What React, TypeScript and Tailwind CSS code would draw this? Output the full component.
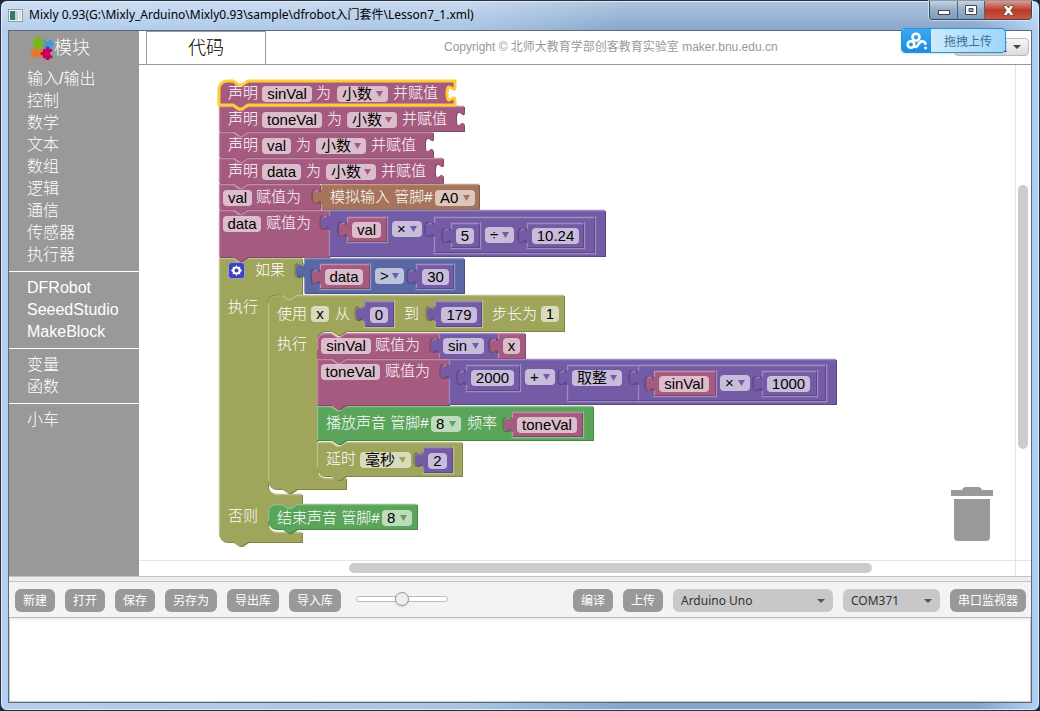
import React from "react";

type Hue = { fill: string; light: string; dark: string };
const PINK: Hue = { fill: "#a55b80", light: "#c08ca6", dark: "#844966" };
const PURPLE: Hue = { fill: "#745ba5", light: "#9e8cc0", dark: "#5d4984" };
const OLIVE: Hue = { fill: "#9fa55b", light: "#bcc08c", dark: "#7f8449" };
const BROWN: Hue = { fill: "#a5745b", light: "#c09e8c", dark: "#845d49" };
const BLUE: Hue = { fill: "#5b67a5", light: "#8c95c0", dark: "#495284" };
const GREEN: Hue = { fill: "#5ba55b", light: "#8cc08c", dark: "#498449" };

/* Scene coordinates of the workspace's top left corner. */
const ORIGIN = { x: 139, y: 65 };

const NOTCH = "l6,4 h3 l6,-4";
const NOSE = "l-6,4 h-3 l-6,-4";
const TAB_UP = "c0,-10 -8,8 -8,-7.5 s8,2.5 8,-7.5";
const TAB_DOWN = "c0,10 -8,-8 -8,7.5 s8,-2.5 8,7.5";

function Shape({ d, edge, hue }: { d: string; edge: string; hue: Hue }) {
  return (
    <g>
      <path d={d} fill={hue.dark} transform="translate(1,1)" />
      <path d={d} fill={hue.fill} />
      <path d={edge} fill="none" stroke={hue.light} strokeWidth="1.3" />
    </g>
  );
}

type BoxProps = { x: number; y: number; w: number; h: number; hue: Hue };

/* A block that gives a value, with the puzzle tab at its left. */
function Value({ x, y, w, h, hue, inside, flush }: BoxProps & { inside: Hue; flush?: boolean }) {
  return (
    <g>
      {!flush && (
        <path
          d={`M${x - 0.5},${y + h + 1.5} H${x + w + 1.5} V${y - 1}`}
          fill="none"
          stroke={inside.light}
          strokeWidth="1.3"
        />
      )}
      <path d={`M${x - 1},${y + 20} ${TAB_UP}`} fill="none" stroke={inside.dark} strokeWidth="1.5" />
      <Shape
        hue={hue}
        d={`M${x},${y} h${w} v${h} h${-w} V${y + 20} ${TAB_UP} z`}
        edge={`M${x + 0.5},${y + h} V${y + 20} m-4,-4 m4,-10 V${y + 0.5} H${x + w}`}
      />
      <path d={`M${x - 6.5},${y + 8} q1,-2.500 4.500,-1`} fill="none" stroke={hue.light} />
    </g>
  );
}

type RowProps = BoxProps & { roundTop?: boolean; roundBottom?: boolean; socket?: boolean; selected?: boolean };

/* A block that is stacked under and over others. */
function Row({ x, y, w, h, hue, roundTop, roundBottom, socket, selected }: RowProps) {
  const top = roundTop ? `M${x},${y + 8} a8,8 0 0 1 8,-8 H${x + 14}` : `M${x},${y} H${x + 14}`;
  const right = socket ? `v5 ${TAB_DOWN} V${y + h}` : `v${h}`;
  const bottom = roundBottom
    ? `H${x + 29} ${NOSE} H${x + 8} a8,8 0 0 1 -8,-8 z`
    : `H${x + 29} ${NOSE} H${x} z`;
  const d = `${top} ${NOTCH} H${x + w} ${right} ${bottom}`;
  const edge = roundTop
    ? `M${x + 0.5},${y + h - 8} V${y + 8} a7.5,7.5 0 0 1 7.5,-7.5 H${x + 14} ${NOTCH} H${x + w}`
    : `M${x + 0.5},${y + h - (roundBottom ? 8 : 0)} V${y + 0.5} H${x + 14} ${NOTCH} H${x + w}`;
  return (
    <g>
      <Shape d={d} edge={edge} hue={hue} />
      {selected && <path d={d} fill="none" stroke="#fc3" strokeWidth="3" strokeLinejoin="round" />}
    </g>
  );
}

function Blocks() {
  return (
    <svg
      className="absolute left-0 top-0 block"
      width="720"
      height="494"
      viewBox={`${ORIGIN.x} ${ORIGIN.y} 720 494`}
      aria-hidden="true"
    >
      <Shape
        hue={OLIVE}
        d={`M219,258 H233 ${NOTCH} H302 V295 H297 ${NOSE} H276 a8,8 0 0 0 -8,8 V486 a8,8 0 0 0 8,8 H302 V504 H297 ${NOSE} H276 a8,8 0 0 0 -8,8 V524 a8,8 0 0 0 8,8 H302 V542 H248 ${NOSE} H227 a8,8 0 0 1 -8,-8 z`}
        edge="M219.5,534 V258.5 H233 l6,4 h3 l6,-4 H302 M270.5,491.5 a8,8 0 0 0 5.5,3 H302 M270.5,529.5 a8,8 0 0 0 5.5,3 H302"
      />
      <Shape
        hue={OLIVE}
        d={`M268,303 a8,8 0 0 1 8,-8 H282 ${NOTCH} H564 V331 H346 ${NOSE} H325 a8,8 0 0 0 -8,8 V470 a8,8 0 0 0 8,8 H346 V489 H297 ${NOSE} H276 a8,8 0 0 1 -8,-8 z`}
        edge={`M268.5,481 V303 a7.5,7.5 0 0 1 7.5,-7.5 H282 ${NOTCH} H564 M319.5,475.5 a8,8 0 0 0 5.5,3 H346`}
      />
      <path d="M268,303 a8,8 0 0 1 8,-8 H282" fill="none" stroke="#7f8449" />

      <Row x={219} y={106} w={245} h={25} hue={PINK} socket />
      <Row x={219} y={132} w={214} h={25} hue={PINK} socket />
      <Row x={219} y={158} w={224} h={25} hue={PINK} socket />
      <Row x={219} y={184} w={101} h={25} hue={PINK} />
      <Value x={321} y={184} w={158} h={25} hue={BROWN} inside={PINK} flush />
      <Row x={219} y={210} w={110} h={47} hue={PINK} />
      <Value x={329} y={210} w={276} h={46} hue={PURPLE} inside={PINK} flush />
      <Value x={347} y={217} w={39} h={24} hue={PINK} inside={PURPLE} />
      <Value x={434} y={217} w={160} h={35} hue={PURPLE} inside={PURPLE} />
      <Value x={451} y={223} w={28} h={24} hue={PURPLE} inside={PURPLE} />
      <Value x={527} y={223} w={56} h={24} hue={PURPLE} inside={PURPLE} />

      <Value x={304} y={258} w={160} h={35} hue={BLUE} inside={OLIVE} flush />
      <Value x={320} y={264} w={49} h={24} hue={PINK} inside={BLUE} />
      <Value x={416} y={264} w={37} h={24} hue={PURPLE} inside={BLUE} />

      <Value x={364} y={301} w={29} h={25} hue={PURPLE} inside={OLIVE} />
      <Value x={435} y={301} w={46} h={25} hue={PURPLE} inside={OLIVE} />

      <Row x={317} y={442} w={145} h={34} hue={OLIVE} roundBottom />
      <Value x={423} y={447} w={29} h={25} hue={PURPLE} inside={OLIVE} />
      <Row x={317} y={333} w={122} h={25} hue={PINK} roundTop />
      <Value x={439} y={333} w={59} h={25} hue={PURPLE} inside={PINK} flush />
      <Value x={498} y={333} w={27} h={25} hue={PINK} inside={PURPLE} flush />
      <Row x={317} y={406} w={276} h={34} hue={GREEN} />
      <Value x={512} y={412} w={70} h={24} hue={PINK} inside={GREEN} />
      <Row x={317} y={359} w={132} h={46} hue={PINK} />
      <Value x={449} y={359} w={387} h={45} hue={PURPLE} inside={PINK} flush />
      <Value x={466} y={365} w={53} h={25} hue={PURPLE} inside={PURPLE} />
      <Value x={567} y={365} w={258} h={35} hue={PURPLE} inside={PURPLE} />
      <Value x={638} y={365} w={187} h={35} hue={PURPLE} inside={PURPLE} />
      <Value x={654} y={371} w={61} h={24} hue={PINK} inside={PURPLE} />
      <Value x={762} y={371} w={54} h={24} hue={PURPLE} inside={PURPLE} />

      <Row x={268} y={504} w={149} h={25} hue={GREEN} roundTop roundBottom />
      <Row x={219} y={81} w={236} h={24} hue={PINK} roundTop socket selected />

      <g transform="translate(228,262)">
        <rect x="0.5" y="0.5" width="16" height="16" rx="3" fill="#4141c0" stroke="#9aa0d8" />
        <path
          d="M8.5,3 l1.3,1.9 2.3,-.2 .3,2.3 1.8,1.5 -1.8,1.5 -.3,2.3 -2.3,-.2 -1.3,1.9 -1.3,-1.9 -2.3,.2 -.3,-2.3 -1.8,-1.5 1.8,-1.5 .3,-2.3 2.3,.2z"
          fill="#fff"
        />
        <circle cx="8.5" cy="8.5" r="2" fill="#4141c0" />
      </g>
    </svg>
  );
}

/* x, y of the middle of the line, text */
const LABELS: [number, number, string][] = [
  [228, 92, "声明"], [316, 92, "为"], [393, 92, "并赋值"],
  [228, 118, "声明"], [327, 118, "为"], [402, 118, "并赋值"],
  [228, 144, "声明"], [296, 144, "为"], [371, 144, "并赋值"],
  [228, 170, "声明"], [306, 170, "为"], [381, 170, "并赋值"],
  [256, 196, "赋值为"], [330, 196, "模拟输入 管脚#"],
  [266, 222, "赋值为"],
  [255, 269, "如果"], [228, 306, "执行"],
  [277, 313, "使用"], [335, 313, "从"], [404, 313, "到"], [492, 313, "步长为"],
  [277, 343, "执行"], [375, 344, "赋值为"], [385, 370, "赋值为"],
  [326, 422, "播放声音 管脚#"], [467, 422, "频率"],
  [326, 458, "延时"],
  [228, 515, "否则"], [277, 517, "结束声音 管脚#"],
];

/* x, y, width, value */
const INPUTS: [number, number, number, string][] = [
  [262, 86, 50, "sinVal"], [262, 112, 60, "toneVal"], [262, 138, 29, "val"], [262, 164, 39, "data"],
  [223, 190, 29, "val"], [223, 216, 38, "data"],
  [352, 222, 29, "val"], [456, 228, 18, "5"], [532, 228, 47, "10.24"],
  [325, 269, 38, "data"], [422, 269, 27, "30"],
  [311, 306, 18, "x"], [370, 307, 18, "0"], [441, 307, 36, "179"], [541, 306, 18, "1"],
  [321, 338, 50, "sinVal"], [503, 338, 17, "x"],
  [321, 364, 59, "toneVal"], [471, 370, 43, "2000"], [659, 376, 50, "sinVal"], [767, 376, 43, "1000"],
  [517, 417, 60, "toneVal"], [428, 453, 19, "2"],
];

/* x, y, width, value, colour of the block it belongs to */
const SELECTS: [number, number, number, string, Hue][] = [
  [337, 86, 51, "小数", PINK], [347, 112, 50, "小数", PINK],
  [316, 138, 50, "小数", PINK], [326, 164, 50, "小数", PINK],
  [435, 190, 40, "A0", BROWN],
  [392, 221, 30, "×", PURPLE], [485, 227, 29, "÷", PURPLE],
  [375, 268, 29, ">", BLUE],
  [443, 338, 41, "sin", PURPLE], [525, 369, 30, "+", PURPLE],
  [572, 370, 50, "取整", PURPLE], [720, 375, 30, "×", PURPLE],
  [431, 416, 30, "8", GREEN], [360, 452, 51, "毫秒", OLIVE],
  [382, 510, 30, "8", GREEN],
];

function Fields() {
  return (
    <>
      {LABELS.map(([x, y, text], i) => (
        <span
          key={i}
          className="absolute h-5 whitespace-pre text-[15px] leading-5 font-light text-white"
          style={{ left: x - ORIGIN.x, top: y - 9 - ORIGIN.y }}
        >
          {text}
        </span>
      ))}
      {INPUTS.map(([x, y, w, value], i) => (
        <input
          key={i}
          aria-label={value}
          defaultValue={value}
          className="absolute h-4 rounded bg-white/60 p-0 text-center text-[15px] leading-4 text-black outline-none"
          style={{ left: x - ORIGIN.x, top: y - ORIGIN.y, width: w }}
        />
      ))}
      {SELECTS.map(([x, y, w, value, hue], i) => (
        <div
          key={i}
          className="absolute h-4 rounded bg-white/60"
          style={{ left: x - ORIGIN.x, top: y - ORIGIN.y, width: w }}
        >
          <select
            aria-label={value}
            className="block h-4 w-full appearance-none bg-transparent py-0 pr-3 pl-[5px] text-[15px] leading-4 text-black outline-none"
          >
            <option>{value}</option>
          </select>
          <svg className="pointer-events-none absolute top-1 right-[5px]" width="7" height="7" viewBox="0 0 7 7">
            <path d="M0,1 H7 L3.5,7z" fill={hue.fill} />
          </svg>
        </div>
      ))}
    </>
  );
}

const CATEGORIES = [
  ["输入/输出", "控制", "数学", "文本", "数组", "逻辑", "通信", "传感器", "执行器"],
  ["DFRobot", "SeeedStudio", "MakeBlock"],
  ["变量", "函数"],
  ["小车"],
];

function PuzzleLogo() {
  return (
    <svg width="24" height="24" viewBox="0 0 24 24" aria-hidden="true">
      <path d="M12.5,3.5 h2.800 c-1,3 4.500,3 3.500,0 h3.200 v3 c2.500,-1 2.500,4 0,3.500 v3 h-3 c1,-3.500 -4.500,-3.500 -3.500,0 h-3z" fill="#3b9bdc" />
      <path d="M3,3 h3 c-1.500,-4 5,-4 3.500,0 h3 v3 c3.500,-1.500 3.500,4.500 0,3.500 v2.500 h-3 c1,3 -4.500,3 -3.500,0 H3z" fill="#7ab51d" />
      <path d="M3,12.500 h3 c-1,3 4.500,3 3.500,0 h3.200 v3 c-3,-1 -3,4.500 0,3.500 v3 h-3.200 c1,-3 -4.500,-3 -3.500,0 H3 v-3 c-4,1 -4,-4.500 0,-3.500z" fill="#f0761c" />
      <path d="M13,13 h2.800 c-1,-3.500 4.500,-3.500 3.500,0 h3 v3 c-3,-1 -3,4 0,3.500 v2.800 h-3 c1,2.500 -4.500,2.500 -3.500,0 h-2.800 v-3 c-3.500,1 -3.500,-4.500 0,-3.500z" fill="#c4005f" />
    </svg>
  );
}

function Sidebar() {
  return (
    <aside className="w-[130px] shrink-0 bg-[#999] text-white">
      <h1 className="mb-1 flex h-[33px] items-center pl-[21px] text-lg leading-6 font-light">
        <PuzzleLogo />
        模块
      </h1>
      <nav>
        {CATEGORIES.map((group, i) => (
          <ul key={i} className={i ? "mt-[5px] border-t border-white pt-[5px]" : ""}>
            {group.map((name) => (
              <li key={name} className="h-[22px]">
                <a href="#" className="block pl-[18px] text-base leading-[22px] font-light">
                  {name}
                </a>
              </li>
            ))}
          </ul>
        ))}
      </nav>
    </aside>
  );
}

function Workspace() {
  return (
    <div className="flex min-h-0 flex-1 flex-col bg-white">
      <div className="flex min-h-0 flex-1">
        <div className="relative min-w-0 flex-1 overflow-hidden">
          <Blocks />
          <Fields />
          <svg className="absolute right-[22px] bottom-[19px]" width="42" height="55" viewBox="0 0 42 55" aria-label="Trash">
            <path d="M0,4 H11 q1,-3 4,-3 H27 q3,0 4,3 H42 V10 H0z M3,13 H39 V51 q0,4 -4,4 H7 q-4,0 -4,-4z" fill="#999" />
          </svg>
        </div>
        <div className="w-4 shrink-0 border-l border-[#e4e4e4] px-[2px] pt-[120px]">
          <div className="h-[264px] w-[10px] rounded-full bg-[#ccc]" />
        </div>
      </div>
      <div className="flex h-4 shrink-0 border-t border-[#e4e4e4]">
        <div className="flex-1 pt-[2px] pl-[210px]">
          <div className="h-[10px] w-[523px] rounded-full bg-[#ccc]" />
        </div>
        <div className="w-4 border-l border-[#e4e4e4]" />
      </div>
    </div>
  );
}

function ToolButton({ children }: { children: React.ReactNode }) {
  return (
    <button className="h-[23px] shrink-0 rounded-md bg-[#999] px-2 pt-[2px] text-xs leading-[21px] whitespace-nowrap text-white">
      {children}
    </button>
  );
}

function ToolSelect({ label, value, width }: { label: string; value: string; width: string }) {
  return (
    <div className={`relative shrink-0 ${width}`}>
      <select
        aria-label={label}
        className="block h-[23px] w-full appearance-none rounded-md bg-[#c8c8c8] pl-2 font-['Noto_Sans','Noto_Sans_CJK_SC',sans-serif] text-xs text-[#333]"
      >
        <option>{value}</option>
      </select>
      <svg className="pointer-events-none absolute top-[10px] right-2" width="8" height="4" viewBox="0 0 8 4">
        <path d="M0,0 H8 L4,4z" fill="#555" />
      </svg>
    </div>
  );
}

function Toolbar() {
  return (
    <div className="flex h-9 shrink-0 items-center gap-[10px] border-b border-[#b9b9b9] bg-[#f3f3f3] pt-[2px] pr-[5px] pl-[6px]">
      {["新建", "打开", "保存", "另存为", "导出库", "导入库"].map((t) => (
        <ToolButton key={t}>{t}</ToolButton>
      ))}
      <input
        type="range"
        aria-label="缩放"
        defaultValue="50"
        className="mb-1 ml-[5px] h-4 w-[92px] appearance-none bg-transparent [&::-webkit-slider-runnable-track]:h-[6px] [&::-webkit-slider-runnable-track]:rounded-full [&::-webkit-slider-runnable-track]:border [&::-webkit-slider-runnable-track]:border-[#bbb] [&::-webkit-slider-runnable-track]:bg-white [&::-webkit-slider-thumb]:-mt-[5px] [&::-webkit-slider-thumb]:size-[14px] [&::-webkit-slider-thumb]:appearance-none [&::-webkit-slider-thumb]:rounded-full [&::-webkit-slider-thumb]:border [&::-webkit-slider-thumb]:border-[#999] [&::-webkit-slider-thumb]:bg-[#eee] [&::-webkit-slider-thumb]:shadow"
      />
      <div className="flex-1" />
      <ToolButton>编译</ToolButton>
      <ToolButton>上传</ToolButton>
      <ToolSelect label="主板" value="Arduino Uno" width="w-[160px]" />
      <ToolSelect label="串口" value="COM371" width="w-[97px]" />
      <ToolButton>串口监视器</ToolButton>
    </div>
  );
}

function TitleBar() {
  return (
    <header className="flex h-[29px] shrink-0 items-start">
      <svg className="mt-[8px]" width="15" height="13" viewBox="0 0 15 13" aria-hidden="true">
        <rect x="0.5" y="0.5" width="14" height="12" fill="#f4f4f4" stroke="#9a9a9a" />
        <rect x="2" y="2" width="5" height="9" fill="#2f7d6c" />
        <rect x="7" y="2" width="3" height="9" fill="#b9d3ea" />
        <rect x="11" y="2" width="2" height="9" fill="#d9d9d9" />
      </svg>
      <p className="mt-1 ml-[6px] font-['Noto_Sans','Noto_Sans_CJK_SC',sans-serif] text-xs leading-5 whitespace-nowrap text-black">
        Mixly 0.93(G:\Mixly_Arduino\Mixly0.93\sample\dfrobot入门套件\Lesson7_1.xml)
      </p>
      <div className="flex-1" />
      <div className="flex h-[19px] overflow-hidden rounded-b border border-t-0 border-[#33475f] shadow-[0_0_0_1px_#ffffff80]">
        <button aria-label="最小化" className="grid w-[28px] place-items-center border-r border-[#4b6583] bg-linear-to-b from-[#c3d3e5] via-[#94acc8] via-50% to-[#7f9bbb]">
          <svg width="12" height="12" viewBox="0 0 12 12">
            <rect x="0.5" y="6.5" width="11" height="4" fill="#fff" stroke="#445" />
          </svg>
        </button>
        <button aria-label="最大化" className="grid w-[27px] place-items-center border-r border-[#4b6583] bg-linear-to-b from-[#c3d3e5] via-[#94acc8] via-50% to-[#7f9bbb]">
          <svg width="12" height="10" viewBox="0 0 12 10">
            <path d="M.5,.5 h11 v9 h-11z M4,3.5 h4 v3 h-4z" fill="#fff" fillRule="evenodd" stroke="#445" />
          </svg>
        </button>
        <button aria-label="关闭" className="grid w-[46px] place-items-center bg-linear-to-b from-[#dc9a8f] via-[#b93a28] via-50% to-[#d0553c]">
          <svg width="13" height="11" viewBox="0 0 13 11">
            <path d="M1,.5 h3.500 L6.500,3 8.500,.5 H12 L8.700,5.500 12,10.500 H8.500 L6.500,8 4.500,10.500 H1 L4.300,5.500z" fill="#fff" stroke="#544" strokeWidth=".8" />
          </svg>
        </button>
      </div>
    </header>
  );
}

function TopRow() {
  return (
    <div className="relative flex h-[34px] shrink-0 border-b border-[#999] bg-white">
      <button className="ml-[7px] w-[120px] shrink-0 border border-b-0 border-[#999] text-lg leading-[30px] font-light text-black">
        代码
      </button>
      <p className="flex-1 pl-[178px] text-xs leading-[33px] whitespace-nowrap text-[#999]">
        Copyright © 北师大教育学部创客教育实验室 maker.bnu.edu.cn
      </p>
      <div className="relative mt-[7px] mr-[2px] h-[18px] w-[75px]">
        <select
          aria-label="语言"
          className="block h-[18px] w-full appearance-none rounded border border-[#bbb] bg-linear-to-b from-[#f6f6f6] to-[#dcdcdc] pl-1 text-xs leading-4 text-black"
        >
          <option>简体中文</option>
        </select>
        <svg className="pointer-events-none absolute top-[7px] right-2" width="8" height="4" viewBox="0 0 8 4">
          <path d="M0,0 H8 L4,4z" fill="#444" />
        </svg>
      </div>
      <button className="absolute -top-[3px] right-[25px] flex h-[25px] w-[105px] overflow-hidden rounded-sm border border-[#2795dc] bg-linear-to-r from-[#dff1fd] to-[#9fd6f7] shadow">
        <span className="grid h-full w-[29px] place-items-center bg-linear-to-b from-[#3aa9f0] to-[#1b8de0]">
          <svg width="22" height="18" viewBox="0 0 22 18" fill="none" stroke="#fff" strokeWidth="2.6">
            <circle cx="5" cy="12.5" r="3.300" />
            <circle cx="10" cy="5.200" r="3.500" />
            <path d="M8,14.500 q2.500,1.500 4,-1.500 q2,-4.500 5.500,-3.500 q2,.7 2,3.200" />
            <path d="M18.300,16 h2.600" />
          </svg>
        </span>
        <span className="flex-1 text-center text-xs leading-[26px] text-[#3b6f9c]">拖拽上传</span>
      </button>
    </div>
  );
}

export default function App() {
  return (
    <div className="h-screen bg-[#1c2a3a] font-['Liberation_Sans','Noto_Sans_CJK_SC',sans-serif]">
      <div className="flex h-full flex-col rounded-[7px] border border-[#26323f] bg-[linear-gradient(to_bottom,#ffffff59,#ffffff00_30px),linear-gradient(to_right,#b4cfee_0,#a9c4e4_45%,#86a6cc_60%,#86a6cc_94%,#b0d2f5_100%)] px-[7px] pb-[7px] shadow-[inset_0_0_0_1px_#dcecfb]">
        <TitleBar />
        <main className="flex min-h-0 flex-1 flex-col border border-[#5b6b7c] bg-[#f3f3f3]">
          <div className="flex min-h-0 flex-1">
            <Sidebar />
            <div className="flex min-w-0 flex-1 flex-col">
              <TopRow />
              <Workspace />
            </div>
          </div>
          <div className="h-[6px] shrink-0 border-y border-[#c4c4c4] bg-[#eee]" />
          <Toolbar />
          <textarea
            aria-label="输出"
            readOnly
            className="block h-[84px] w-full shrink-0 resize-none border border-t-0 border-[#ccc] bg-white p-1 text-xs shadow-[inset_0_2px_3px_#eee] outline-none"
          />
        </main>
      </div>
    </div>
  );
}
